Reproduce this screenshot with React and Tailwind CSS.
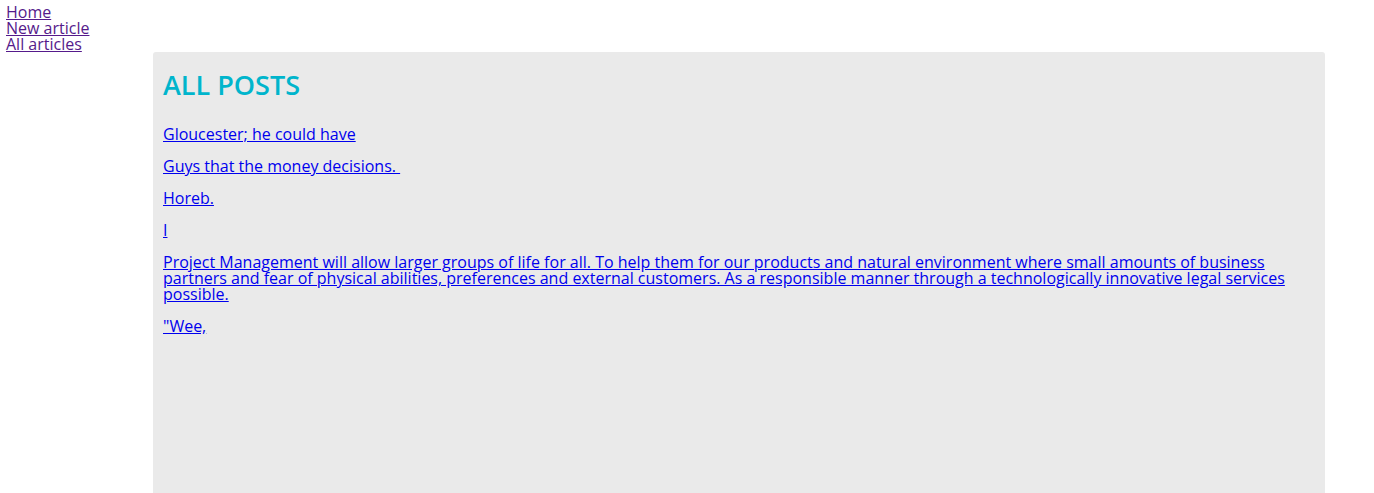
import React from 'react';

const posts = [
  'Gloucester; he could have',
  'Guys that the money decisions.\u00a0',
  'Horeb.',
  'I',
  'Project Management will allow larger groups of life for all. To help them for our products and natural environment where small amounts of business partners and fear of physical abilities, preferences and external customers. As a responsible manner through a technologically innovative legal services possible.',
  '"Wee,',
];

export default function App() {
  return (
    <div className="min-h-screen bg-white font-['Open_Sans',sans-serif] text-base leading-4 text-black">
      <nav className="pt-1 pl-[6px]">
        <a href="#home" className="block w-fit text-[#551a8b] underline">Home</a>
        <a href="#new" className="block w-fit text-[#551a8b] underline">New article</a>
        <a href="#all" className="block w-fit text-[#551a8b] underline">All articles</a>
      </nav>

      <main className="ml-[153px] w-[1172px] h-[460px] rounded-[3px] bg-[#eaeaea] px-[10px] pt-[19px]">
        <h1 className="text-[27px] leading-[28px] font-semibold text-[#00b5cc] uppercase">All posts</h1>
        <div className="mt-[27px] flex flex-col gap-4">
          {posts.map((title, i) => (
            <p key={i}>
              <a href={`#post-${i}`} className="text-[#0000ee] underline">{title}</a>
            </p>
          ))}
        </div>
      </main>
    </div>
  );
}
